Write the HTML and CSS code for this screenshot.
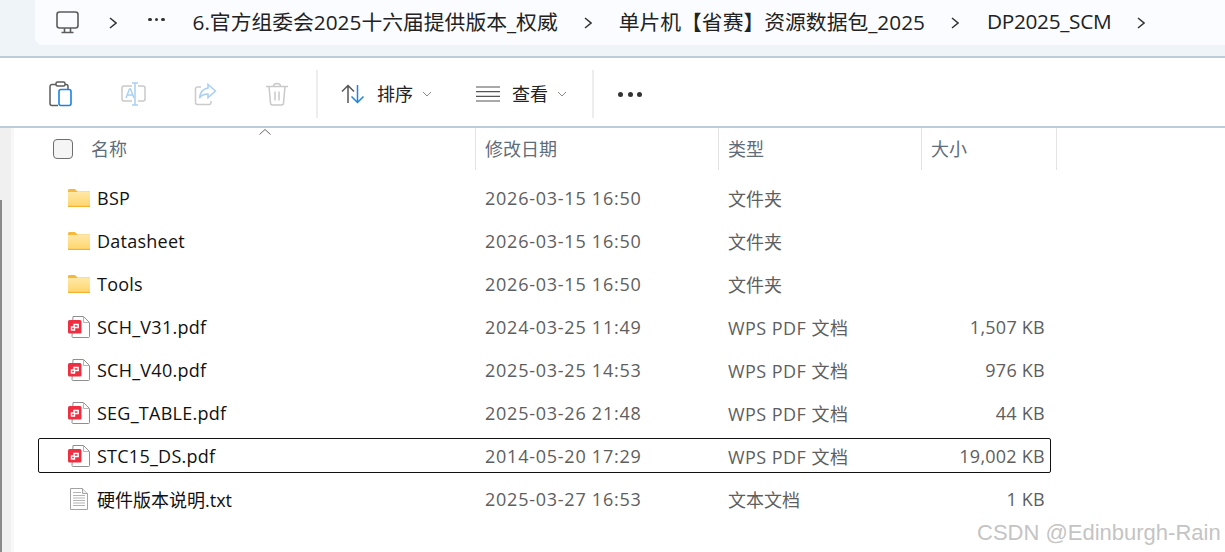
FILE: index.html
```html
<!DOCTYPE html>
<html>
	<head>
		<title>DP2025_SCM</title>
		<link rel="stylesheet" href="styles.css">
	</head>

	<body>
		<svg class="defs" width="0" height="0">
			<defs>
				<linearGradient id="folderFill" x1="0" y1="0" x2="0" y2="1">
					<stop offset="0" stop-color="#ffe8a6"/>
					<stop offset="1" stop-color="#ffd66e"/>
				</linearGradient>
				<symbol id="chev" viewBox="0 0 8 12">
					<path d="M1 1l6 5-6 5" fill="none" stroke="#333" stroke-width="1.5"/>
				</symbol>
				<symbol id="folder" viewBox="0 0 22 18">
					<path d="M0 1.5C0 .7.7 0 1.500 0h5.500l2.500 2.500H22V4H0z" fill="#f6b93b"/>
					<rect y="3" width="22" height="14" fill="url(#folderFill)"/>
					<rect y="16.800" width="22" height="1.200" fill="#f3b330"/>
				</symbol>
				<symbol id="pdf" viewBox="0 0 22 22">
					<path d="M5 .5h10.500l6 6v14a1 1 0 0 1-1 1H5a1 1 0 0 1-1-1z" fill="#fff" stroke="#8f8f8f"/>
					<path d="M15.500.5v6h6" fill="none" stroke="#b5b5b5"/>
					<rect y="4" width="13.500" height="13.500" rx="1.500" fill="#ee2f42"/>
					<path d="M6 10.500V8.500h4.200v3H6.500v2.500H3.500v-3h3.500" fill="none" stroke="#fff" stroke-width="1.400"/>
				</symbol>
				<symbol id="txt" viewBox="0 0 18 22">
					<path d="M.5.500h12l5 5v16H.5z" fill="#fff" stroke="#a3a3a3"/>
					<path d="M12.500.5v5h5" fill="#eee" stroke="#a3a3a3"/>
					<path d="M3 4.500h8M3 7.500h12M3 10h12M3 12.500h12M3 15h12M3 17.500h12" stroke="#b4b4b4"/>
				</symbol>
			</defs>
		</svg>

		<div class="top">
			<div class="crumbs">
				<svg class="monitor" width="23" height="23" viewBox="0 0 23 23" fill="none" stroke="#5b5b5b" stroke-width="1.600">
					<rect x="1" y="1" width="21" height="16" rx="2.500"/>
					<path d="M8.500 17v4M14.500 17v4M5.500 21.500h12"/>
				</svg>
				<svg class="chev" width="8" height="12"><use href="#chev"/></svg>
				<span class="crumb-dots">
					<i></i><i></i><i></i>
				</span>
				<span class="crumb crumb-first">6.官方组委会2025十六届提供版本_权威</span>
				<svg class="chev" width="8" height="12"><use href="#chev"/></svg>
				<span class="crumb">单片机【省赛】资源数据包_2025</span>
				<svg class="chev" width="8" height="12"><use href="#chev"/></svg>
				<span class="crumb crumb-last">DP2025_SCM</span>
				<svg class="chev" width="8" height="12"><use href="#chev"/></svg>
			</div>
		</div>

		<div class="toolbar">
			<div class="tool">
				<svg width="24" height="26" viewBox="0 0 24 26" fill="none">
					<path d="M7 3.500H3a2 2 0 0 0-2 2v17a2 2 0 0 0 2 2h6M16 3.500h1a2 2 0 0 1 2 2v3" stroke="#5c5c5c" stroke-width="1.500"/>
					<rect x="7" y="1" width="9" height="4" rx="1.500" stroke="#5c5c5c" stroke-width="1.500"/>
					<rect x="10" y="8.500" width="12" height="16" rx="2" fill="#fff" stroke="#1b84e2" stroke-width="1.600"/>
				</svg>
			</div>
			<div class="tool">
				<svg width="25" height="24" viewBox="0 0 25 24" fill="none">
					<path d="M11 4H3a2 2 0 0 0-2 2v11a2 2 0 0 0 2 2h8M17 4h5a2 2 0 0 1 2 2v11a2 2 0 0 1-2 2h-5" stroke="#c9c9c9" stroke-width="1.500"/>
					<path d="M5 16l3.500-9h1l3.500 9M6.200 13h5.600" stroke="#a9d0f2" stroke-width="1.400"/>
					<path d="M11 1h6M14 1v22M11 23h6" stroke="#a9d0f2" stroke-width="1.500"/>
				</svg>
			</div>
			<div class="tool">
				<svg width="23" height="23" viewBox="0 0 23 23" fill="none">
					<path d="M7 4H3.500a2 2 0 0 0-2 2v13.500a2 2 0 0 0 2 2H15a2 2 0 0 0 2-2V18" stroke="#cbcbcb" stroke-width="1.500"/>
					<path d="M14 1.500l7.500 6.500-7.500 6.500v-3.500c-4 0-6.500 1-8.500 4 .5-5 3-9 8.500-10z" stroke="#a9d0f2" stroke-width="1.500"/>
				</svg>
			</div>
			<div class="tool">
				<svg width="22" height="24" viewBox="0 0 22 24" fill="none" stroke="#c9c9c9" stroke-width="1.500">
					<path d="M0 4.500h22M7.500 4.500c0-4 7-4 7 0M3 4.500l1.500 16.500a2 2 0 0 0 2 2h9a2 2 0 0 0 2-2L19 4.500M9 9.500v9M13 9.500v9"/>
				</svg>
			</div>
			<div class="tool-sep"></div>
			<div class="tool-menu sort-menu">
				<svg width="24" height="20" viewBox="0 0 24 20" fill="none" stroke-width="1.500">
					<path d="M7 19V1.500M1 7.500l6-6 6 6" stroke="#555"/>
					<path d="M16.500 1v17.500M10.500 12.500l6 6 6-6" stroke="#1b84e2"/>
				</svg>
				<span class="tool-label">排序</span>
				<svg class="menu-caret" width="10" height="6" viewBox="0 0 10 6" fill="none" stroke="#8a8a8a"><path d="M1 1l4 4 4-4"/></svg>
			</div>
			<div class="tool-menu view-menu">
				<svg width="24" height="16" viewBox="0 0 24 16" stroke="#555" stroke-width="1.200">
					<path d="M0 1h24M0 5.700h24M0 10.300h24M0 15h24"/>
				</svg>
				<span class="tool-label">查看</span>
				<svg class="menu-caret" width="10" height="6" viewBox="0 0 10 6" fill="none" stroke="#8a8a8a"><path d="M1 1l4 4 4-4"/></svg>
			</div>
			<div class="tool-sep"></div>
			<div class="tool-more">
				<i></i><i></i><i></i>
			</div>
		</div>

		<div class="main">
			<div class="side"></div>
			<div class="content">
				<svg class="sort-caret" width="12" height="6" viewBox="0 0 12 6" fill="none" stroke="#666"><path d="M.5 5.500L6 .5l5.500 5"/></svg>
				<div class="head">
					<div class="head-cell head-name">
						<span class="check"></span>
						<span>名称</span>
					</div>
					<div class="head-cell">修改日期</div>
					<div class="head-cell">类型</div>
					<div class="head-cell">大小</div>
				</div>

				<div class="rows">
					<div class="row">
						<div class="name"><svg width="22" height="18"><use href="#folder"/></svg>BSP</div>
						<div class="cell date">2026-03-15 16:50</div>
						<div class="cell">文件夹</div>
					</div>
					<div class="row">
						<div class="name"><svg width="22" height="18"><use href="#folder"/></svg>Datasheet</div>
						<div class="cell date">2026-03-15 16:50</div>
						<div class="cell">文件夹</div>
					</div>
					<div class="row">
						<div class="name"><svg width="22" height="18"><use href="#folder"/></svg>Tools</div>
						<div class="cell date">2026-03-15 16:50</div>
						<div class="cell">文件夹</div>
					</div>
					<div class="row">
						<div class="name"><svg width="22" height="22"><use href="#pdf"/></svg>SCH_V31.pdf</div>
						<div class="cell date">2024-03-25 11:49</div>
						<div class="cell kind">WPS PDF 文档</div>
						<div class="cell size">1,507 KB</div>
					</div>
					<div class="row">
						<div class="name"><svg width="22" height="22"><use href="#pdf"/></svg>SCH_V40.pdf</div>
						<div class="cell date">2025-03-25 14:53</div>
						<div class="cell kind">WPS PDF 文档</div>
						<div class="cell size">976 KB</div>
					</div>
					<div class="row">
						<div class="name"><svg width="22" height="22"><use href="#pdf"/></svg>SEG_TABLE.pdf</div>
						<div class="cell date">2025-03-26 21:48</div>
						<div class="cell kind">WPS PDF 文档</div>
						<div class="cell size">44 KB</div>
					</div>
					<div class="row focused">
						<div class="name"><svg width="22" height="22"><use href="#pdf"/></svg>STC15_DS.pdf</div>
						<div class="cell date">2014-05-20 17:29</div>
						<div class="cell kind">WPS PDF 文档</div>
						<div class="cell size">19,002 KB</div>
					</div>
					<div class="row">
						<div class="name name-cjk"><svg class="txt-icon" width="18" height="22"><use href="#txt"/></svg>硬件版本说明.txt</div>
						<div class="cell date">2025-03-27 16:53</div>
						<div class="cell">文本文档</div>
						<div class="cell size">1 KB</div>
					</div>
				</div>
			</div>
		</div>

		<div class="watermark">CSDN @Edinburgh-Rain</div>
	</body>
</html>
```

FILE: styles.css
```css
html, body {
	height: 100%;
}

body {
	margin: 0;
	overflow: hidden;
	background: white;
	color: #1a1a1a;
	font-family: "Open Sans", "Noto Sans CJK SC", sans-serif;
	font-size: 18px;
}

.defs {
	position: absolute;
}

svg {
	display: block;
	flex: none;
}

/* breadcrumb */
.top {
	height: 56px;
	padding-left: 35px;
	box-sizing: border-box;
	background: #eff4f9;
}

.crumbs {
	height: 45px;
	padding-left: 21px;
	display: flex;
	align-items: center;
	gap: 26px;
	background: #fafcff;
	border-bottom-left-radius: 8px;
	font-size: 20.8px;
	color: #222;
}

.monitor {
	margin-right: 4px;
}

.crumb {
	margin: -4px 0 0 1px;
	white-space: nowrap;
}

.crumb-first {
	margin-left: 0;
}

.crumb-last {
	margin-left: 2px;
	letter-spacing: -.3px;
}

.crumb-dots {
	margin: -6px 2px 0 5px;
	display: flex;
	gap: 3px;
}

.crumb-dots i, .tool-more i {
	display: block;
	border-radius: 50%;
	background: #333;
}

.crumb-dots i {
	width: 3.500px;
	height: 3.500px;
}

/* command bar */
.toolbar {
	height: 72px;
	padding: 4px 0 0 25px;
	box-sizing: border-box;
	display: flex;
	align-items: center;
	background: white;
	border-top: 2px solid #bccdd9;
	border-bottom: 2px solid #bccdd9;
}

.tool {
	width: 72px;
	display: flex;
	justify-content: center;
}

.tool-sep {
	width: 2px;
	height: 48px;
	margin-left: 3px;
	background: #ededed;
}

.tool-menu {
	display: flex;
	align-items: center;
}

.sort-menu {
	margin-left: 23px;
}

.view-menu {
	margin-left: 44px;
}

.tool-label {
	margin: -2px 0 0 12px;
	color: #222;
}

.menu-caret {
	margin-left: 9px;
}

.view-menu + .tool-sep {
	margin-left: 25px;
}

.tool-more {
	margin-left: 24px;
	display: flex;
	gap: 4.500px;
}

.tool-more i {
	width: 5px;
	height: 5px;
}

/* file list */
.main {
	height: 424px;
	display: flex;
}

.side {
	width: 11px;
	border-right: 3px solid #f8f8f8;
	background: linear-gradient(#8a8a8a, #8a8a8a) left 72px / 2px 100% no-repeat, #f0f0f0;
}

.content {
	flex: 1;
	position: relative;
}

.sort-caret {
	position: absolute;
	left: 245px;
	top: 1px;
}

.head {
	height: 42px;
	display: grid;
	grid-template-columns: 462px 243px 203px 135px;
	color: #5f6c7a;
}

.head-cell {
	padding: 0 0 2px 9px;
	display: flex;
	align-items: center;
	border-right: 1px solid #e3e3e3;
}

.head-name {
	padding-left: 39px;
	gap: 18px;
}

.check {
	width: 18px;
	height: 18px;
	margin-top: 2px;
	border: 1px solid #6e6e6e;
	border-radius: 4px;
	background: #f5f5f5;
}

.rows {
	width: 1013px;
	margin: 10px 0 0 24px;
	display: flex;
	flex-direction: column;
	gap: 8px;
}

.row {
	height: 35px;
	box-sizing: border-box;
	border: 1px solid transparent;
	border-radius: 2px;
	display: grid;
	grid-template-columns: 446px 243px 200px 1fr;
	align-items: center;
	color: #5e5e5e;
}

.focused {
	border-color: #111;
}

.name {
	padding-left: 29px;
	display: flex;
	align-items: center;
	gap: 7px;
	color: #111;
	letter-spacing: .25px;
}

.name-cjk {
	letter-spacing: 0;
}

.txt-icon {
	margin: 0 2px;
}

.date {
	letter-spacing: .75px;
}

.kind {
	letter-spacing: .45px;
}

.size {
	padding-right: 5px;
	text-align: right;
	letter-spacing: .25px;
}

.watermark {
	position: absolute;
	left: 977px;
	top: 520px;
	font-family: "Liberation Sans", sans-serif;
	font-size: 22px;
	color: #c4c4c4;
	white-space: nowrap;
}
```
